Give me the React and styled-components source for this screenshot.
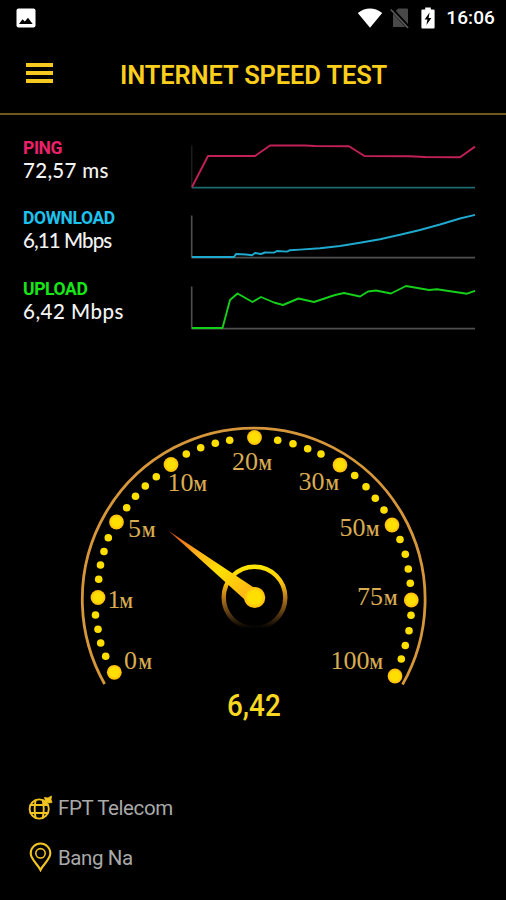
import React from "react";
import styled, { createGlobalStyle } from "styled-components";

const GlobalStyle = createGlobalStyle`
  body {
    margin: 0;
    background-color: #000;
  }
`;

const Container = styled.div`
  width: 506px;
  height: 900px;
  display: flex;
  flex-direction: column;
  overflow: hidden;
  background-color: #000;
  color: #fff;
  font-family: Roboto, "Liberation Sans", sans-serif;
`;

const StatusBar = styled.div`
  height: 36px;
  flex-shrink: 0;
  display: flex;
  align-items: center;
  justify-content: space-between;
  box-sizing: border-box;
  padding: 0 11px 0 16px;
`;

const StatusGroup = styled.div`
  display: flex;
  align-items: center;
`;

const StatusIcon = styled.svg`
  display: block;
  margin-right: ${(props) => props.$gap || 0}px;
`;

const Clock = styled.span`
  font-size: 19px;
  font-weight: 500;
  line-height: 36px;
  letter-spacing: 0.1px;
`;

const Header = styled.header`
  height: 77px;
  flex-shrink: 0;
  display: flex;
  align-items: center;
  padding-left: 26px;
  border-bottom: 2px solid #6b581a;
`;

const MenuButton = styled.button`
  width: 27px;
  margin: 0 67px 3px 0;
  padding: 0;
  display: flex;
  flex-direction: column;
  gap: 3.6px;
  border: none;
  background: none;
  cursor: pointer;
`;

const MenuLine = styled.span`
  height: 4px;
  width: 100%;
  background-color: #f6c921;
`;

const Title = styled.h1`
  margin: 0;
  color: #fccf1c;
  font-size: 25.5px;
  font-weight: 600;
  line-height: 30px;
  letter-spacing: -0.13px;
  white-space: nowrap;
`;

const Metrics = styled.section`
  display: flex;
  flex-direction: column;
  flex-shrink: 0;
  padding: 22px 0 0 23px;
`;

const Metric = styled.div`
  display: flex;
  height: 70.3px;
`;

const MetricInfo = styled.div`
  width: 167px;
  display: flex;
  flex-direction: column;
`;

const MetricName = styled.span`
  color: ${(props) => props.color};
  font-size: 17.5px;
  font-weight: 700;
  line-height: 23px;
  letter-spacing: -0.4px;
`;

const MetricValue = styled.span`
  color: #f2f2f2;
  font-family: Lato, sans-serif;
  font-size: 20.5px;
  font-weight: 500;
  line-height: 21px;
  letter-spacing: ${(props) => props.$spacing}px;
`;

const Chart = styled.svg`
  display: block;
  margin-top: 6px;
  overflow: visible;
`;

const GaugeWrapper = styled.section`
  display: flex;
  flex-direction: column;
  align-items: center;
  padding: 69px 0 0 2px;
  flex-shrink: 0;
`;

const GaugeSvg = styled.svg`
  display: block;
`;

const Reading = styled.span`
  color: #f9d821;
  font-size: 32px;
  font-weight: 500;
  line-height: 30px;
  height: 30px;
  transform: scaleX(0.87);
`;

const Footer = styled.footer`
  display: flex;
  flex-direction: column;
  padding: 63px 0 0 27px;
`;

const FooterRow = styled.div`
  height: 49.5px;
  display: flex;
  align-items: center;
`;

const FooterIcon = styled.svg`
  display: block;
  width: 27px;
  height: 30px;
  margin-right: 4px;
`;

const FooterText = styled.span`
  color: #a9a9a9;
  font-size: 20.5px;
  line-height: 26px;
  padding-top: 1px;
  letter-spacing: -0.4px;
`;

const metrics = [
  {
    name: "PING",
    value: "72,57 ms",
    color: "#ec2169",
    line: "#c22058",
    axis: "#1c6a6c",
    side: "#1c1c1c",
    valueSpacing: 0.3,
    points:
      "2,44 18,13 65,13 80,2.5 115,2.5 125,3 159,3.2 174.5,13 220,13.2 235,14 270,14.2 285,3.6",
  },
  {
    name: "DOWNLOAD",
    value: "6,11 Mbps",
    color: "#1cc3ee",
    line: "#1fa9ce",
    axis: "#4f4f4f",
    side: "#4f4f4f",
    valueSpacing: -0.9,
    points:
      "2,44 44,44 46,41 56,41.5 62,42.3 65,40 71,41 75,39.5 84,39.6 87,38 97,38.6 100,37.2 110,36.6 130,35.2 150,33 170,29.7 190,26.2 210,21.8 230,17 250,11.5 270,5.5 285,1.8",
  },
  {
    name: "UPLOAD",
    value: "6,42 Mbps",
    color: "#19e619",
    line: "#16cf1a",
    axis: "#4f4f4f",
    side: "#4f4f4f",
    valueSpacing: 0.5,
    points:
      "2,44 32.5,44 40,16 47.5,9.5 62.5,18 71,13 84,18.5 93,21 108.5,14.5 124,18 145,11 154,9 170,12.5 178,7.5 186,6.5 201,9.5 216,2 239,6 247,5.2 277,9.7 285,6.8",
  },
];

const majorDots = [
  [114.3, 672.3],
  [98, 597.5],
  [116.5, 522],
  [171, 464.5],
  [254.5, 437.5],
  [340, 465],
  [392, 525],
  [411.3, 600],
  [395, 676],
];

const minorDots = [
  [105.7, 656.3], [100.7, 643], [98, 629.3], [95.5, 615],
  [98.7, 579.3], [100.5, 565], [104, 551.5], [108.3, 537.7],
  [126.7, 507.7], [135.5, 496.3], [145.3, 486], [156.3, 476.7],
  [186.3, 454], [200.7, 447.7], [215.3, 443.3], [229.7, 440.3],
  [277.7, 440.3], [293, 443.7], [307.7, 448.7], [321, 454],
  [354.7, 475.5], [366, 486.7], [375.3, 498.3], [384, 510],
  [400, 539.5], [405.3, 554.3], [408.3, 569], [410.3, 583.3],
  [411, 615.3], [409, 630.7], [405.3, 645.5], [401.3, 659],
];

// x: left edge of the number, m: left edge of the unit
const labels = [
  { text: "0", x: 124, m: 138.5, y: 669 },
  { text: "1", x: 107.5, m: 119.5, y: 607.5 },
  { text: "5", x: 128, m: 142, y: 537 },
  { text: "10", x: 167.5, m: 193.5, y: 491 },
  { text: "20", x: 232, m: 258.5, y: 470 },
  { text: "30", x: 298.5, m: 325.5, y: 490 },
  { text: "50", x: 339.5, m: 366, y: 535.5 },
  { text: "75", x: 357, m: 384, y: 605 },
  { text: "100", x: 330.5, m: 369.5, y: 669 },
];

function Sparkline({ metric }) {
  return (
    <Chart width="287" height="47" viewBox="0 0 287 47" fill="none">
      <path d="M1.7 2.5V45" stroke={metric.side} strokeWidth="1.6" />
      <path d="M1.7 44.6H285" stroke={metric.axis} strokeWidth="1.6" />
      <polyline
        points={metric.points}
        stroke={metric.line}
        strokeWidth="1.9"
        strokeLinejoin="round"
      />
    </Chart>
  );
}

function Gauge() {
  return (
    <GaugeSvg width="366" height="273" viewBox="71 417 366 273">
      <defs>
        <linearGradient id="ring" x1="0" y1="0" x2="0" y2="1">
          <stop offset="0" stopColor="#ffe600" />
          <stop offset="0.25" stopColor="#ffc60a" />
          <stop offset="0.5" stopColor="#b8771a" />
          <stop offset="0.8" stopColor="#4a3010" />
          <stop offset="1" stopColor="#000" />
        </linearGradient>
        <linearGradient id="needle" x1="0" y1="0" x2="1" y2="1">
          <stop offset="0" stopColor="#d8431a" />
          <stop offset="0.3" stopColor="#ffb01a" />
          <stop offset="0.55" stopColor="#ffe000" />
          <stop offset="1" stopColor="#ffa51f" />
        </linearGradient>
        <radialGradient id="dot">
          <stop offset="0.6" stopColor="#ffdf00" />
          <stop offset="1" stopColor="#ffb910" />
        </radialGradient>
      </defs>

      <path
        d="M104.6 684 A171.4 171.4 0 1 1 402.5 684.5"
        fill="none"
        stroke="#d6963a"
        strokeWidth="2.8"
      />

      {majorDots.map(([x, y]) => (
        <circle key={`${x}-${y}`} cx={x} cy={y} r="7.4" fill="url(#dot)" />
      ))}
      {minorDots.map(([x, y]) => (
        <circle key={`${x}-${y}`} cx={x} cy={y} r="3.8" fill="#ffdf00" />
      ))}

      <g fill="#d9ab52" fontFamily="'Liberation Serif', serif">
        {labels.map((label) => (
          <React.Fragment key={label.text}>
            <text x={label.x} y={label.y} fontSize="26">
              {label.text}
            </text>
            <text
              x={label.m}
              y={label.y}
              fontSize="16.5"
              fontWeight="700"
              textLength="13.5"
              lengthAdjust="spacingAndGlyphs"
            >
              M
            </text>
          </React.Fragment>
        ))}
      </g>

      <circle cx="254.5" cy="597.5" r="30.8" fill="none" stroke="url(#ring)" strokeWidth="4.4" />
      <path d="M168.8 531 L259 591 L249 603.5 Z" fill="url(#needle)" />
      <circle cx="254.7" cy="597.5" r="10.6" fill="url(#dot)" />
    </GaugeSvg>
  );
}

function App() {
  return (
    <Container>
      <GlobalStyle />
      <StatusBar>
        <StatusIcon width="20" height="20" viewBox="0 0 20 20">
          <rect x="0.5" y="0.5" width="19" height="19" rx="2" fill="#fff" />
          <path d="M3 16 L6.5 11.2 L8.8 13.6 L12 9.8 L16.7 16 Z" fill="#000" />
        </StatusIcon>
        <StatusGroup>
          <StatusIcon $gap={7} width="26" height="20" viewBox="0 0 26 20">
            <path d="M0.8 5 Q13 -3.8 25.2 5 L13 19.8 Z" fill="#fff" />
          </StatusIcon>
          <StatusIcon $gap={11} width="20" height="22" viewBox="0 0 20 22">
            <path d="M8 1.5 H17 Q18 1.5 18 2.5 V20 H3 V7 Z" fill="#484848" />
            <path d="M1 1.5 L19 21" stroke="#000" strokeWidth="4" />
            <path d="M0.8 2.5 L18 20.8" stroke="#585858" strokeWidth="1.8" />
          </StatusIcon>
          <StatusIcon $gap={11} width="14" height="22" viewBox="0 0 14 22">
            <path
              d="M4.2 0.5 H9.8 V2.5 H12.5 Q13.6 2.5 13.6 3.6 V20.4 Q13.6 21.5 12.5 21.5 H1.5 Q0.4 21.5 0.4 20.4 V3.6 Q0.4 2.5 1.5 2.5 H4.2 Z"
              fill="#fff"
            />
            <path d="M8.6 5.5 L3.6 12.6 H6.4 L5.4 18 L10.4 10.9 H7.6 Z" fill="#000" />
          </StatusIcon>
          <Clock>16:06</Clock>
        </StatusGroup>
      </StatusBar>

      <Header>
        <MenuButton aria-label="Menu">
          <MenuLine />
          <MenuLine />
          <MenuLine />
        </MenuButton>
        <Title>INTERNET SPEED TEST</Title>
      </Header>

      <Metrics>
        {metrics.map((metric) => (
          <Metric key={metric.name}>
            <MetricInfo>
              <MetricName color={metric.color}>{metric.name}</MetricName>
              <MetricValue $spacing={metric.valueSpacing}>{metric.value}</MetricValue>
            </MetricInfo>
            <Sparkline metric={metric} />
          </Metric>
        ))}
      </Metrics>

      <GaugeWrapper>
        <Gauge />
        <Reading>6,42</Reading>
      </GaugeWrapper>

      <Footer>
        <FooterRow>
          <FooterIcon viewBox="0 0 27 30" fill="none" stroke="#f1c422" strokeWidth="1.9">
            <circle cx="12.2" cy="16" r="9.6" />
            <path d="M2.8 12H21.4M2.8 20H21.4M8.7 7Q6.6 16 8.7 25M15.7 7Q17.8 16 15.7 25" />
            <path d="M15.5 12.5 L22 6" strokeWidth="2.6" />
            <path d="M17.5 4.5 L21 5 L24.5 3 L24 6.5 L25 9.5 L21.5 10 L18.5 8 Z" fill="#f1c422" strokeWidth="0.8" />
          </FooterIcon>
          <FooterText>FPT Telecom</FooterText>
        </FooterRow>
        <FooterRow>
          <FooterIcon viewBox="0 0 27 30" fill="none" stroke="#f1c422" strokeWidth="2.1">
            <path d="M13.5 28 C11 22.5 3.7 17.5 3.7 11.3 A9.8 9.8 0 0 1 23.3 11.3 C23.3 17.5 16 22.5 13.5 28 Z" />
            <circle cx="13.5" cy="11.3" r="4.7" strokeWidth="1.6" />
          </FooterIcon>
          <FooterText>Bang Na</FooterText>
        </FooterRow>
      </Footer>
    </Container>
  );
}

export default App;
